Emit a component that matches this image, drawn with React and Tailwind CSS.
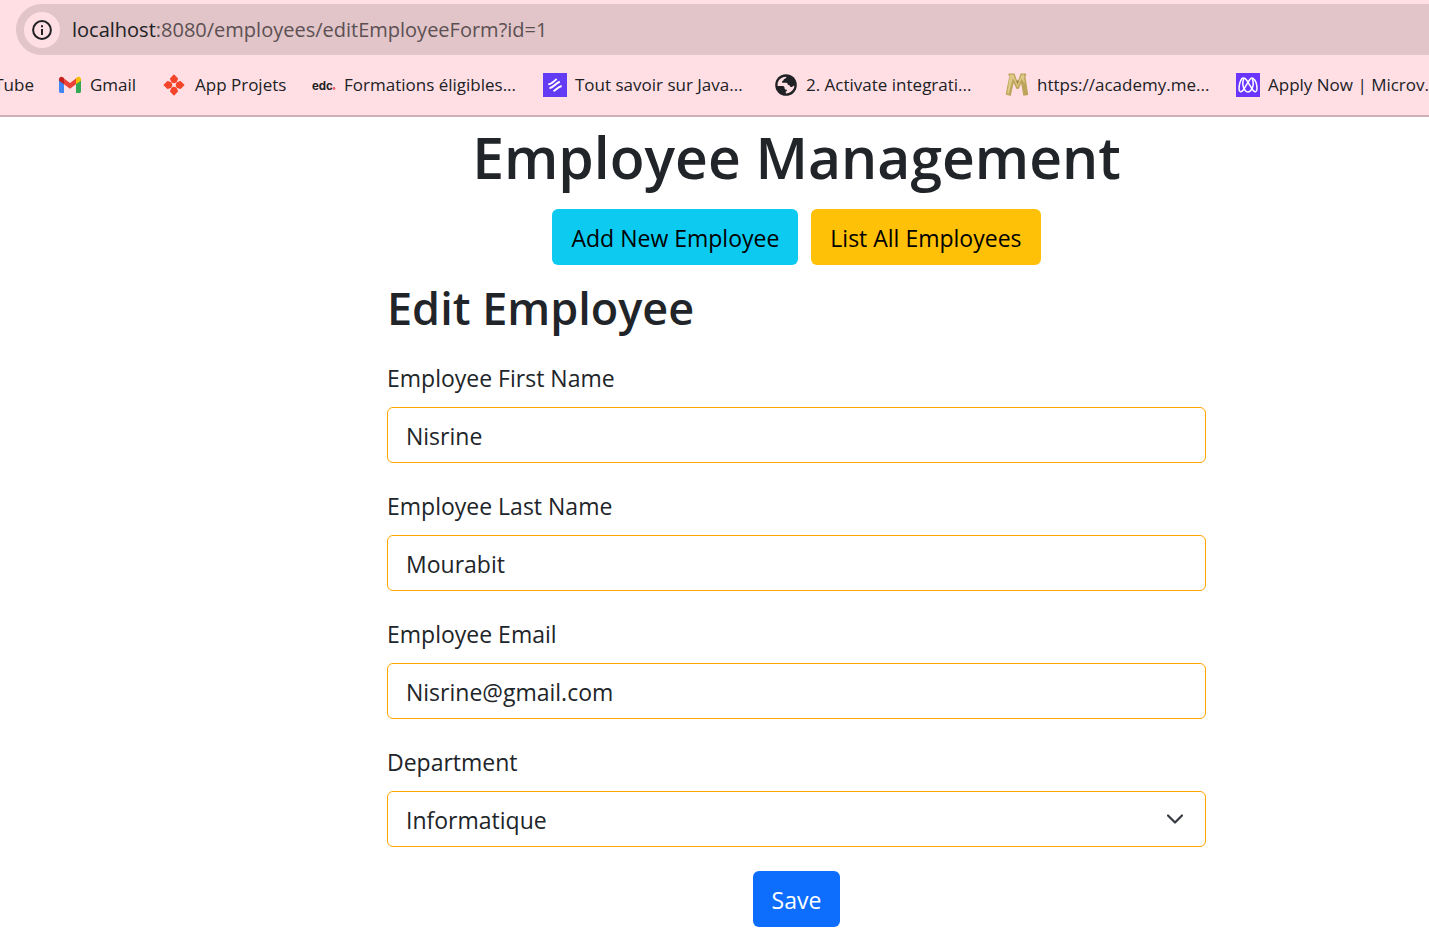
import { useState } from "react";

function GmailIcon() {
  return (
    <svg viewBox="0 0 24 24" className="size-6 shrink-0" aria-hidden="true">
      <path fill="#4285f4" d="M1 6v12.6c0 .8.6 1.4 1.4 1.4H6V9.7z" />
      <path fill="#34a853" d="M18 9.7V20h3.600c.8 0 1.400-.6 1.400-1.400V6z" />
      <path fill="#ea4335" d="M6 5.600l6 4.500 6-4.500v5.600l-6 4.500-6-4.500z" />
      <path fill="#c5221f" d="M1 6.200C1 3.800 3.700 3 5.300 4.600L6 5.200v6L1 7.700z" />
      <path fill="#fbbc04" d="M23 6.200c0-2.400-2.700-3.200-4.300-1.600l-.7.6v6l5-3.500z" />
    </svg>
  );
}

function ProjetsIcon() {
  return (
    <svg viewBox="0 0 24 24" className="size-6 shrink-0" aria-hidden="true">
      <g fill="#f4452b" stroke="#f4452b" strokeWidth="1.500" strokeLinejoin="round">
        <path d="M11 2.300l3.300 3.400-1.300 3.100-2 .8-2-.8-1.300-3.100z" />
        <path d="M11 21.700l3.300-3.400-1.300-3.100-2-.8-2 .8-1.300 3.100z" />
        <path d="M1.300 12l3.400-3.300 3.100 1.300.8 2-.8 2-3.100 1.300z" />
        <path d="M20.700 12l-3.400-3.300-3.100 1.300-.8 2 .8 2 3.100 1.300z" />
      </g>
    </svg>
  );
}

function EdcIcon() {
  return (
    <svg viewBox="0 0 24 24" className="size-6 shrink-0" aria-hidden="true">
      <text x="0" y="16.500" fontSize="11.500" fontWeight="700" fontFamily="Inter, sans-serif" fill="#222">
        edc
      </text>
      <circle cx="22" cy="15.500" r="1.400" fill="#f4606c" />
    </svg>
  );
}

function StripesIcon() {
  return (
    <svg viewBox="0 0 24 24" className="size-6 shrink-0" aria-hidden="true">
      <path fill="#643bf5" d="M0 0h24v24H0z" />
      <g fill="none" stroke="#fff" strokeWidth="2">
        <path d="M5.300 11.300c3.500 0 5.500-3.300 8.400-5.300" />
        <path d="M6.500 15.200c4-.6 6-4.800 10.300-6.400" />
        <path d="M10.500 18.200c2.500-1.200 4.300-4.400 8.200-5.200" />
      </g>
    </svg>
  );
}

function GlobeIcon() {
  return (
    <svg viewBox="0 0 24 24" className="size-6 shrink-0" aria-hidden="true">
      <circle cx="12" cy="12" r="10.800" fill="#202124" />
      <path
        fill="#ffdfe4"
        d="M3.600 10.800C4.200 6.800 7.500 4 12.300 3.800c.2 1.600-1 1.800-2.300 2.200-.2 1.300-.9 1.800-1.900 2.200v1.500h4c1.300 0 1.600.9 1.800 2.200h1.500c.4 1.500 1 2.200 2.600 2 .9-.3 1.300-1.200 2.400-1.400-.4 4.600-3.800 7.700-8.600 7.900v-1.900c.9-.4 1.400-.8 1.100-1.700-1.800 0-2.400-.8-2.400-2.400-.2-1.300-1.300-1.500-2.600-1.500H3.600z"
      />
    </svg>
  );
}

function GoldIcon() {
  return (
    <svg viewBox="0 0 24 24" className="size-6 shrink-0" aria-hidden="true">
      <path fill="#bda45a" d="M3.500.6h6L12.600 9 15.600.6h5.500v2l-.7.3L23.200 22l-4.800.8-2.200-12.300-2.600 5.500h-2L8.600 10 5.700 23 .7 21.500 4.300 3l-.8-.4z" />
      <path fill="#ddca88" d="M5 1.800h3.500l4 10.500 4-10.500h2.500l.8 9-3.200-5-4 8.700-4.700-9.500-4.200 16-1.500-.6z" />
      <path fill="#927735" d="M11.600 7.500h2l-.9 3.500z" />
    </svg>
  );
}

function LoopsIcon() {
  return (
    <svg viewBox="0 0 24 24" className="size-6 shrink-0" aria-hidden="true">
      <path fill="#6a35ff" d="M0 0h24v24H0z" />
      <g fill="none" stroke="#fff" strokeWidth="1.500" strokeLinejoin="round">
        <path d="M7.500 5C4.500 5 3 12 3 15.500s2.200 4.300 4 1.800L13.500 7c1.200-2 2.600-2.600 3.800-1.400C19.800 7.500 21 12 21 15.500s-2.200 4.300-4 1.800L10.500 7C9.600 5.600 8.600 5 7.500 5z" />
        <path d="M7.800 5.200C6.300 9.500 7 14.500 9 17.200c1.700 2.400 4.300 2.400 6 0 2-2.700 2.700-7.700 1.200-12" />
      </g>
    </svg>
  );
}

function InfoIcon() {
  return (
    <svg viewBox="0 0 20 20" className="size-5" aria-hidden="true">
      <circle cx="10" cy="10" r="8.900" fill="none" stroke="#202124" strokeWidth="2" />
      <path fill="#202124" d="M9 9h2v6H9zM9 5.300h2v2H9z" />
    </svg>
  );
}

const bookmarks = [
  { label: "Gmail", Icon: GmailIcon },
  { label: "App Projets", Icon: ProjetsIcon },
  { label: "Formations éligibles...", Icon: EdcIcon },
  { label: "Tout savoir sur Java...", Icon: StripesIcon },
  { label: "2. Activate integrati...", Icon: GlobeIcon },
  { label: "https://academy.me...", Icon: GoldIcon },
  { label: "Apply Now | Microv...", Icon: LoopsIcon },
];

function BrowserBar() {
  return (
    <header className="overflow-hidden border-b-2 border-[#ceb1b8] bg-[#ffdfe4] pt-1">
      <div className="ml-4 flex h-[51px] items-center gap-3 rounded-l-full bg-[#e1c5c9] pl-2">
        <button type="button" aria-label="Site information" className="flex size-9 items-center justify-center rounded-full bg-[#ffdfe4]">
          <InfoIcon />
        </button>
        <p className="text-[20px] text-[#5c5053]">
          <span className="text-[#202124]">localhost</span>:8080/employees/editEmployeeForm?id=1
        </p>
      </div>
      <nav className="grid h-[60px] grid-cols-[58px_105px_149px_231px_231px_231px_231px_1fr] items-center text-[17px] whitespace-nowrap text-[#202124]">
        <a href="#youtube" className="flex justify-end pr-6">YouTube</a>
        {bookmarks.map(({ label, Icon }) => (
          <a key={label} href="#bookmark" className="flex w-0 items-center gap-2">
            <Icon />
            <span>{label}</span>
          </a>
        ))}
      </nav>
    </header>
  );
}

const control = "h-14 w-full rounded-md border border-[#ffa500] bg-white px-[18px] pt-0.5";

function TextField({ id, label, type = "text", initial }) {
  const [value, setValue] = useState(initial);
  return (
    <div className="flex flex-col gap-2.5">
      <label htmlFor={id} className="leading-[38px]">{label}</label>
      <input id={id} type={type} value={value} onChange={(e) => setValue(e.target.value)} className={control} />
    </div>
  );
}

export default function App() {
  return (
    <div className="min-h-screen bg-white font-['Open_Sans',sans-serif] text-[#212529]">
      <BrowserBar />
      <main className="pt-1 pr-[223px] pb-2 pl-[387px] text-[23px]">
        <h1 className="mb-4 text-center text-[57px] leading-[72px] font-semibold whitespace-nowrap">Employee Management</h1>
        <div className="flex justify-center gap-[13px] whitespace-nowrap text-black">
          <a href="#add" className="flex h-14 items-center rounded-md bg-[#0dcaf0] px-[19px] pt-0.5">Add New Employee</a>
          <a href="#list" className="flex h-14 items-center rounded-md bg-[#ffc107] px-[19px] pt-0.5">List All Employees</a>
        </div>
        <h2 className="mt-3.5 mb-[22px] text-[45px] leading-[58px] font-semibold">Edit Employee</h2>
        <form className="flex flex-col gap-6" onSubmit={(e) => e.preventDefault()}>
          <TextField id="first-name" label="Employee First Name" initial="Nisrine" />
          <TextField id="last-name" label="Employee Last Name" initial="Mourabit" />
          <TextField id="email" label="Employee Email" type="email" initial="Nisrine@gmail.com" />
          <div className="flex flex-col gap-2.5">
            <label htmlFor="department" className="leading-[38px]">Department</label>
            <div className="relative">
              <select id="department" className={`${control} appearance-none`}>
                <option>Informatique</option>
              </select>
              <svg viewBox="0 0 16 16" className="pointer-events-none absolute top-5 right-[23px] size-4" aria-hidden="true">
                <path d="M1 4.500l7 7 7-7" fill="none" stroke="#343a40" strokeWidth="2.200" strokeLinecap="round" strokeLinejoin="round" />
              </svg>
            </div>
          </div>
          <button type="submit" className="h-14 self-center rounded-md bg-[#0d6efd] px-[19px] pt-0.5 text-white">Save</button>
        </form>
      </main>
    </div>
  );
}
